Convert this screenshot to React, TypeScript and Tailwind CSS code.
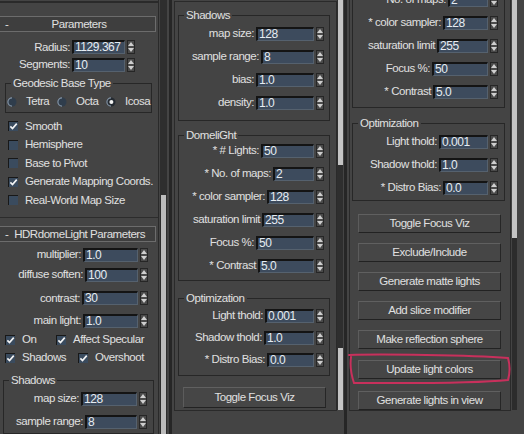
import clsx from 'clsx'
import type { ReactNode } from 'react'

function Spinner() {
  return (
    <div className="flex h-[14px] w-[8px] shrink-0 flex-col items-center justify-between border border-[#262626] bg-[#4a4a4a] py-[1px]">
      <svg viewBox="0 0 6 4" className="h-[4px] w-[6px]">
        <path d="M3 0L6 4H0Z" fill="#cfcfcf" />
      </svg>
      <svg viewBox="0 0 6 4" className="h-[4px] w-[6px]">
        <path d="M0 0H6L3 4Z" fill="#cfcfcf" />
      </svg>
    </div>
  )
}

function NumField({ value, w }: { value: string; w: string }) {
  return (
    <div
      className={clsx(
        'h-[14px] shrink-0 border-b border-l-2 border-r border-t-2 border-b-[#55616e] border-l-[#141414] border-r-[#55616e] border-t-[#141414] bg-[#3d4b5d] pl-[1px] text-[12px] leading-[11px] text-[#e6ecf2]',
        w,
      )}
    >
      {value}
    </div>
  )
}

/** label + numeric field + spinner, right aligned inside its box */
function SpinRow({
  label,
  value,
  w,
  className,
}: {
  label: string
  value: string
  w: string
  className: string
}) {
  return (
    <div className={clsx('flex items-center justify-end', className)}>
      <span className="mr-[2px] whitespace-nowrap">{label}</span>
      <NumField value={value} w={w} />
      <div className="ml-[2px]">
        <Spinner />
      </div>
    </div>
  )
}

function Check({ on }: { on?: boolean }) {
  return (
    <div className="flex h-[10px] w-[10px] shrink-0 items-center justify-center border-l border-t border-[#181818] bg-[#3a4b5e]">
      {on && (
        <svg viewBox="0 0 10 10" className="h-[9px] w-[9px]">
          <path d="M1.5 4.8L3.9 7.3L8.6 1.8" fill="none" stroke="#f4f4f4" strokeWidth="1.8" />
        </svg>
      )}
    </div>
  )
}

function CheckItem({ label, on, className }: { label: string; on?: boolean; className?: string }) {
  return (
    <div className={clsx('flex items-center', className)}>
      <Check on={on} />
      <span className="ml-[7px] whitespace-nowrap">{label}</span>
    </div>
  )
}

function Radio({ label, on, className }: { label: string; on?: boolean; className?: string }) {
  return (
    <div className={clsx('flex items-center', className)}>
      <svg width="10" height="10" viewBox="0 0 10 10" className="shrink-0">
        <circle cx="5" cy="5" r="4.5" fill={on ? '#242a31' : '#2f3d4c'} />
        <path d="M5 0.9A4.1 4.1 0 0 0 5 9.1" fill="none" stroke="#8494a5" strokeWidth="1.2" />
        {on && <circle cx="5.4" cy="5" r="2" fill="#f2f2f2" />}
      </svg>
      <span className="ml-[9px]">{label}</span>
    </div>
  )
}

function Group({ title, className, children }: { title?: string; className?: string; children: ReactNode }) {
  return (
    <fieldset className={clsx('border border-[#272727]', className)}>
      {title && <legend className="ml-[5px] px-[2px] leading-[14px]">{title}</legend>}
      {children}
    </fieldset>
  )
}

function Header({ children, className }: { children: ReactNode; className?: string }) {
  return (
    <div
      className={clsx(
        '-ml-[4px] flex h-[16px] w-[160px] shrink-0 items-center border border-[#6c6c6c] bg-[#3e3e3e] leading-[14px]',
        className,
      )}
    >
      <span className="ml-[8px] w-[10px]">-</span>
      <span className="flex-1 whitespace-nowrap pl-[2px] text-center">{children}</span>
      <span className="w-[14px]" />
    </div>
  )
}

function MaxButton({ children, className }: { children: ReactNode; className?: string }) {
  return (
    <div
      className={clsx(
        'flex w-[143px] shrink-0 items-center justify-center border border-b-[#222] border-l-[#5c5c5c] border-r-[#262626] border-t-[#606060] bg-[#464646] whitespace-nowrap',
        className,
      )}
    >
      {children}
    </div>
  )
}

export default function App() {
  return (
    <div className="relative flex h-[434px] w-[524px] overflow-hidden bg-[#444444] text-[11.5px] tracking-[-0.45px] text-[#e0e0e0] [font-family:'Liberation_Sans',Arial,sans-serif]">
      {/* left column: sphere params + HDRdomeLight */}
      <div className="flex w-[158px] shrink-0 flex-col">
        <div className="mt-[1px] h-[2px] shrink-0 bg-[#2a2a2a]" />
        <Header className="mt-[13px]">Parameters</Header>
        <SpinRow className="mt-[6px] h-[20px] pr-[23px]" label="Radius:" value="1129.367" w="w-[53px]" />
        <SpinRow className="-mt-[1px] h-[20px] pr-[23px]" label="Segments:" value="10" w="w-[53px]" />
        <Group title="Geodesic Base Type" className="ml-[5px] mt-[2px] w-[147px] pb-[1px]">
          <div className="mt-[3px] flex h-[18px] items-center pl-[1px]">
            <Radio label="Tetra" className="w-[50px]" />
            <Radio label="Octa" className="w-[49px]" />
            <Radio label="Icosa" on />
          </div>
        </Group>
        <CheckItem className="mt-[4px] h-[20px] pl-[8px]" label="Smooth" on />
        <CheckItem className="h-[20px] pl-[8px]" label="Hemisphere" />
        <CheckItem className="h-[20px] pl-[8px]" label="Base to Pivot" />
        <CheckItem className="h-[20px] pl-[8px]" label="Generate Mapping Coords." on />
        <CheckItem className="h-[20px] pl-[8px]" label="Real-World Map Size" />
        <div className="mt-[7px] h-[1px] shrink-0 bg-[#2c2c2c]" />
        <Header className="mt-[8px]">HDRdomeLight Parameters</Header>
        <SpinRow className="mt-[3px] h-[22px] pr-[10px]" label="multiplier:" value="1.0" w="w-[55px]" />
        <SpinRow className="h-[22px] pr-[10px]" label="diffuse soften:" value="100" w="w-[53px]" />
        <SpinRow className="mt-[3px] h-[22px] pr-[10px]" label="contrast:" value="30" w="w-[56px]" />
        <SpinRow className="mt-[2px] h-[22px] pr-[10px]" label="main light:" value="1.0" w="w-[55px]" />
        <div className="flex h-[19px] items-center pl-[5px]">
          <CheckItem className="w-[51px]" label="On" on />
          <CheckItem label="Affect Specular" on />
        </div>
        <div className="flex h-[20px] items-center pl-[5px]">
          <CheckItem className="w-[73px]" label="Shadows" on />
          <CheckItem label="Overshoot" on />
        </div>
        <Group title="Shadows" className="ml-[3px] mt-[6px] w-[151px]">
          <SpinRow className="h-[23px] pr-[6px]" label="map size:" value="128" w="w-[56px]" />
          <SpinRow className="h-[23px] pr-[6px]" label="sample range:" value="8" w="w-[52px]" />
        </Group>
      </div>

      {/* scrollbar 1 */}
      <div className="w-[1px] shrink-0 bg-[#2a2a2a]" />
      <div className="flex w-[13px] shrink-0">
        <div className="w-[1px]" />
        <div className="flex w-[7px] flex-col bg-[#2e2e2e] px-[1px]">
          <div className="h-[195px]" />
          <div className="flex-1 bg-[#bcbcbc]" />
        </div>
        <div className="w-[2px]" />
        <div className="w-[3px] bg-[#262626]" />
      </div>

      {/* middle column */}
      <div className="flex w-[165px] shrink-0 flex-col">
        <div className="ml-[2px] mt-[1px] flex h-[410px] w-[163px] flex-col border border-[#2a2a2a] pt-[6px]">
          <Group title="Shadows" className="ml-[3px] w-[152px] pb-[6px]">
            <SpinRow className="h-[23px] pr-[5px]" label="map size:" value="128" w="w-[58px]" />
            <SpinRow className="h-[23px] pr-[5px]" label="sample range:" value="8" w="w-[53px]" />
            <SpinRow className="h-[23px] pr-[5px]" label="bias:" value="1.0" w="w-[58px]" />
            <SpinRow className="h-[23px] pr-[5px]" label="density:" value="1.0" w="w-[58px]" />
          </Group>
          <Group title="DomeliGht" className="ml-[3px] mt-[7px] w-[152px] pb-[3px]">
            <div className="-mt-[3px]">
              <SpinRow className="h-[23px] pr-[5px]" label="* # Lights:" value="50" w="w-[53px]" />
              <SpinRow className="h-[23px] pr-[5px]" label="* No. of maps:" value="2" w="w-[41px]" />
              <SpinRow className="h-[23px] pr-[5px]" label="* color sampler:" value="128" w="w-[47px]" />
              <SpinRow className="h-[23px] pr-[5px]" label="saturation limit" value="255" w="w-[52px]" />
              <SpinRow className="h-[23px] pr-[5px]" label="Focus %:" value="50" w="w-[58px]" />
              <SpinRow className="h-[23px] pr-[5px]" label="* Contrast" value="5.0" w="w-[56px]" />
            </div>
          </Group>
          <Group title="Optimization" className="ml-[3px] mt-[10px] w-[152px] pb-[4px]">
            <SpinRow className="h-[22px] pr-[5px]" label="Light thold:" value="0.001" w="w-[49px]" />
            <SpinRow className="h-[22px] pr-[5px]" label="Shadow thold:" value="1.0" w="w-[50px]" />
            <SpinRow className="h-[22px] pr-[5px]" label="* Distro Bias:" value="0.0" w="w-[47px]" />
          </Group>
          <MaxButton className="ml-[8px] mt-[11px] h-[21px]">Toggle Focus Viz</MaxButton>
        </div>
      </div>

      {/* scrollbar 2 */}
      <div className="flex w-[10px] shrink-0">
        <div className="flex h-[410px] w-[6px] flex-col bg-[#2e2e2e] pl-[1px]">
          <div className="h-[165px] bg-[#c4c4c4]" />
          <div className="h-[183px]" />
          <div className="flex-1 bg-[#c4c4c4]" />
        </div>
        <div className="w-[1px]" />
        <div className="w-[3px] bg-[#262626]" />
      </div>

      {/* right column */}
      <div className="flex w-[177px] shrink-0">
        <div className="ml-[2px] flex h-[411px] w-[162px] shrink-0 flex-col border-x border-b border-[#2a2a2a]">
          <div className="ml-[2px] w-[153px] shrink-0 border-x border-b border-[#272727] pb-[4px]">
            <div className="-mt-[12px]">
              <SpinRow className="h-[23px] pr-[6px]" label="* No. of maps:" value="2" w="w-[40px]" />
              <SpinRow className="h-[23px] pr-[6px]" label="* color sampler:" value="128" w="w-[45px]" />
              <SpinRow className="h-[23px] pr-[6px]" label="saturation limit" value="255" w="w-[51px]" />
              <SpinRow className="h-[23px] pr-[6px]" label="Focus %:" value="50" w="w-[56px]" />
              <SpinRow className="h-[23px] pr-[6px]" label="* Contrast" value="5.0" w="w-[55px]" />
            </div>
          </div>
          <Group title="Optimization" className="ml-[2px] mt-[8px] w-[153px] pb-[1px]">
            <SpinRow className="h-[23px] pr-[6px]" label="Light thold:" value="0.001" w="w-[49px]" />
            <SpinRow className="h-[23px] pr-[6px]" label="Shadow thold:" value="1.0" w="w-[49px]" />
            <SpinRow className="h-[23px] pr-[6px]" label="* Distro Bias:" value="0.0" w="w-[45px]" />
          </Group>
          <MaxButton className="ml-[8px] mt-[13px] h-[19px]">Toggle Focus Viz</MaxButton>
          <MaxButton className="ml-[8px] mt-[10px] h-[19px]">Exclude/Include</MaxButton>
          <MaxButton className="ml-[8px] mt-[10px] h-[19px]">Generate matte lights</MaxButton>
          <MaxButton className="ml-[8px] mt-[10px] h-[19px]">Add slice modifier</MaxButton>
          <MaxButton className="ml-[8px] mt-[10px] h-[19px]">Make reflection sphere</MaxButton>
          <MaxButton className="ml-[8px] mt-[11px] h-[19px]">Update light colors</MaxButton>
          <MaxButton className="ml-[8px] mt-[12px] h-[19px]">Generate lights in view</MaxButton>
        </div>
        <div className="ml-[1px] flex h-[410px] w-[5px] shrink-0 flex-col bg-[#2c2c2c]">
          <div className="h-[238px] bg-[#c4c4c4]" />
        </div>
      </div>

      {/* hand-drawn highlight around "Update light colors" */}
      <svg className="pointer-events-none absolute left-0 top-0" width="524" height="434" viewBox="0 0 524 434">
        <path
          d="M349 355C380 354 470 355 508 358C510 365 510 373 508 380C470 384 400 383 354 383C351 374 350 364 351 357"
          fill="none"
          stroke="#c8305c"
          strokeWidth="2"
          strokeLinecap="round"
        />
      </svg>
    </div>
  )
}
